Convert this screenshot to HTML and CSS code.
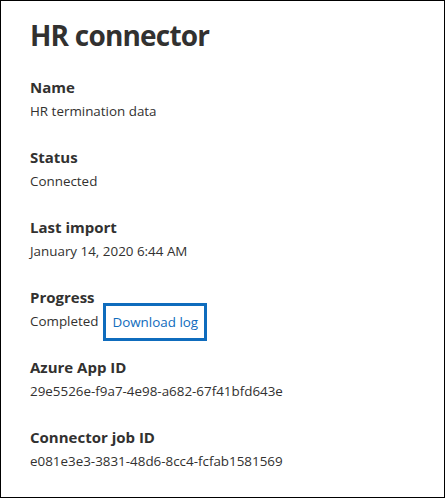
FILE: index.html
```html
<!DOCTYPE html>
<html>
<head>
<meta charset="utf-8">
<link rel="stylesheet" href="styles.css">
</head>
<body>
<div class="panel">
  <h1 class="title">HR connector</h1>
  <dl class="fields">
    <div class="field">
      <dt class="label">Name</dt>
      <dd class="value">HR termination data</dd>
    </div>
    <div class="field">
      <dt class="label">Status</dt>
      <dd class="value">Connected</dd>
    </div>
    <div class="field">
      <dt class="label">Last import</dt>
      <dd class="value">January 14, 2020 6:44 AM</dd>
    </div>
    <div class="field">
      <dt class="label">Progress</dt>
      <dd class="value value-row">Completed <a class="download" href="#">Download log</a></dd>
    </div>
    <div class="field">
      <dt class="label">Azure App ID</dt>
      <dd class="value">29e5526e-f9a7-4e98-a682-67f41bfd643e</dd>
    </div>
    <div class="field">
      <dt class="label">Connector job ID</dt>
      <dd class="value">e081e3e3-3831-48d6-8cc4-fcfab1581569</dd>
    </div>
  </dl>
</div>
</body>
</html>
```

FILE: styles.css
```css
html, body {
  margin: 0;
  padding: 0;
  background: #fff;
}
body {
  font-family: "Open Sans", "Noto Sans", sans-serif;
  color: #323130;
}
.panel {
  box-sizing: border-box;
  width: 445px;
  height: 498px;
  border: 1px solid #000;
  padding: 15px 0 0 29px;
}
.title {
  margin: 0;
  font-size: 28px;
  line-height: 38px;
  font-weight: 700;
  letter-spacing: -0.8px;
  color: #323130;
}
.fields {
  margin: 22px 0 0 0;
}
.field {
  margin-bottom: 22px;
}
.label {
  font-size: 15px;
  font-weight: 700;
  line-height: 23px;
}
.value {
  margin: 0;
  font-size: 13.4px;
  line-height: 25px;
}
.value-row {
  display: flex;
  align-items: center;
  gap: 5px;
  height: 25px;
}
.download {
  color: #0f6cbd;
  text-decoration: none;
  border: 3px solid #0f6cbd;
  padding: 5px 6px;
  line-height: 22px;
  margin: -7px 0;
}
```
